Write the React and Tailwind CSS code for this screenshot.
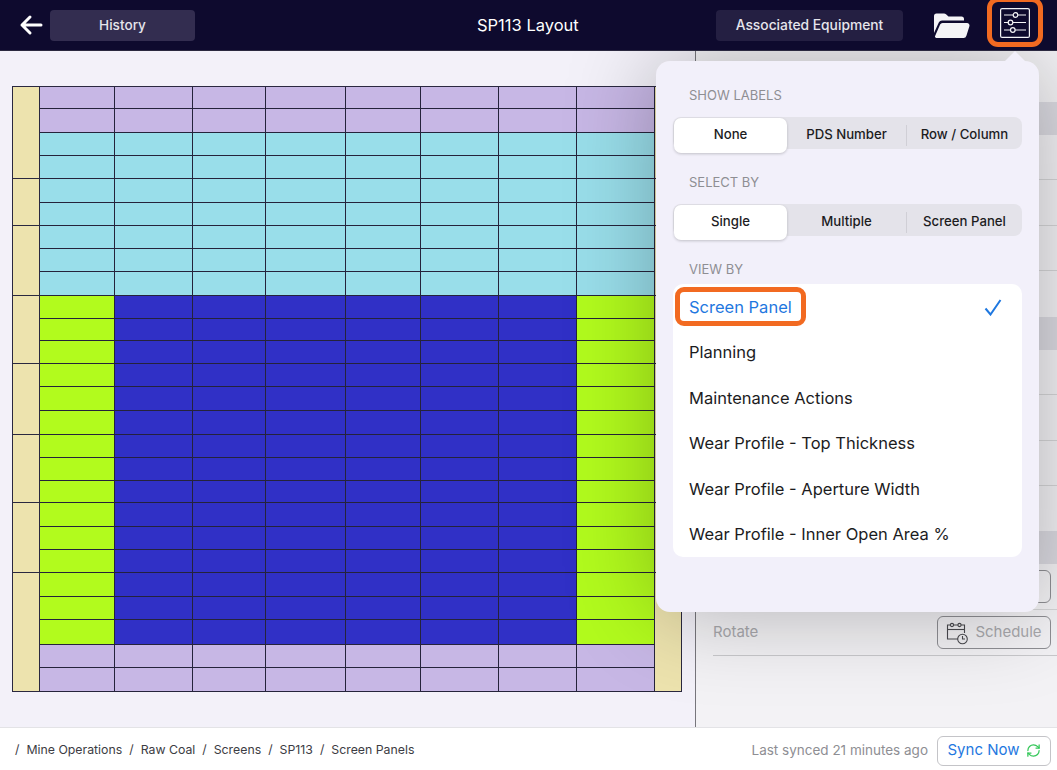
import { RefreshCw } from 'lucide-react';

const segments = [
  { label: 'SHOW LABELS', options: ['None', 'PDS Number', 'Row / Column'] },
  { label: 'SELECT BY', options: ['Single', 'Multiple', 'Screen Panel'] },
];

const viewOptions = [
  'Planning',
  'Maintenance Actions',
  'Wear Profile - Top Thickness',
  'Wear Profile - Aperture Width',
  'Wear Profile - Inner Open Area %',
];

const crumbs = ['Mine Operations', 'Raw Coal', 'Screens', 'SP113', 'Screen Panels'];

const stripBlocks = ['h-[92px]', 'h-[47px]', 'h-[70px]', 'h-[68px]', 'h-[71px]', 'h-[68px]', 'h-[70px]', 'h-[119px]'];

// 26 rows, 8 columns
const rowKind = (row) => {
  if (row < 2 || row >= 24) return 'purple';
  if (row < 9) return 'teal';
  return 'mixed';
};

const cellColor = (row, col) => {
  const kind = rowKind(row);
  if (kind === 'purple') return 'bg-[#c7b7e5]';
  if (kind === 'teal') return 'bg-[#99deea]';
  return col === 0 || col === 7 ? 'bg-[#b2fb1d]' : 'bg-[#3030c6]';
};

function Strip({ className }) {
  return (
    <div className={`flex flex-col ${className}`}>
      {stripBlocks.map((h, i) => (
        <div key={i} className={`${h} bg-[#ede3ae] border-b border-[#2a2840]`} />
      ))}
    </div>
  );
}

function PanelGrid() {
  const cells = [];
  for (let row = 0; row < 26; row++) {
    for (let col = 0; col < 8; col++) {
      cells.push(
        <div
          key={`${row}-${col}`}
          className={`${cellColor(row, col)} border-b border-r border-[#25233b]`}
        />
      );
    }
  }
  return (
    <div className="flex w-[670px] h-[606px] border-t border-l border-r border-[#2a2840]">
      <Strip className="w-[27px] border-r border-[#2a2840]" />
      <div className="grid grid-cols-[75px_78px_73px_80px_75px_78px_78px_78px] grid-rows-[22px_24px_23px_23px_24px_23px_23px_23px_24px_23px_22px_23px_23px_24px_24px_23px_23px_22px_24px_23px_23px_24px_23px_25px_23px_24px]">
        {cells}
      </div>
      <Strip className="flex-1" />
    </div>
  );
}

function CalendarClock() {
  return (
    <svg width="22" height="24" viewBox="0 0 22 24" fill="none" stroke="#4a4a4f" strokeWidth="1.1">
      <path d="M12 18H1.500V4h17v8" />
      <path d="M1.500 8.500h17" />
      <circle cx="6" cy="4" r="1.600" fill="#efeef0" />
      <circle cx="13.500" cy="4" r="1.600" fill="#efeef0" />
      <circle cx="16.500" cy="18" r="4.800" />
      <path d="M16.500 15v3h2.500" />
    </svg>
  );
}

function RightPanel() {
  return (
    <div className="flex-1 flex flex-col bg-[#f3f2f5] text-[15px] text-[#a9a9ad]">
      <div className="h-[51px]" />
      <div className="h-[33px] bg-[#dcdbe2]" />
      <div className="ml-[17px] h-[45px] border-b border-[#d6d6d8]" />
      <div className="ml-[17px] h-[46px] border-b border-[#d6d6d8]" />
      <div className="ml-[17px] h-[45px] border-b border-[#d6d6d8]" />
      <div className="h-[46px]" />
      <div className="h-[33px] bg-[#dcdbe2]" />
      <div className="ml-[17px] h-[45px] border-b border-[#d6d6d8]" />
      <div className="ml-[17px] h-[46px] border-b border-[#d6d6d8]" />
      <div className="ml-[17px] h-[45px] border-b border-[#d6d6d8]" />
      <div className="h-[45px]" />
      <div className="h-[33px] bg-[#dcdbe2]" />
      <div className="ml-[17px] h-[46px] border-b border-[#d6d6d8] flex items-center justify-end pr-[6px]">
        <div className="w-[114px] h-[33px] border border-[#8f8f94] rounded-md" />
      </div>
      <div className="ml-[17px] h-[46px] border-b border-[#c9c9cc] flex items-center justify-between pr-[6px]">
        <span>Rotate</span>
        <div className="w-[114px] h-[33px] border border-[#8f8f94] rounded-md flex items-center justify-center gap-[7px]">
          <CalendarClock />
          <span>Schedule</span>
        </div>
      </div>
    </div>
  );
}

function Popover() {
  return (
    <div className="absolute left-[656px] top-[61px] w-[383px] h-[551px] bg-[#f2f0fa] rounded-[14px] shadow-[0_0_90px_rgba(0,0,0,0.28)] z-10 px-[17px] pt-[26px]">
      <div className="absolute right-[13px] -top-[10px] w-0 h-0 border-l-[11px] border-r-[11px] border-b-[11px] border-l-transparent border-r-transparent border-b-[#f2f0fa]" />
      {segments.map((seg) => (
        <div key={seg.label} className="mb-[25px]">
          <div className="text-[13px] leading-4 text-[#8e8e93] pl-4 mb-[14px]">{seg.label}</div>
          <div className="grid grid-cols-[113px_119px_116px] h-[32px] p-px bg-[#e4e3ea] rounded-lg text-[13.200px] font-medium text-[#1c1c1e]">
            {seg.options.map((opt, i) => (
              <div
                key={opt}
                className={`flex items-center justify-center pb-px ${
                  i === 0 ? 'bg-white rounded-[7px] shadow-[0_1px_3px_rgba(0,0,0,0.2)]' : ''
                } ${i === 2 ? 'border-l border-[#d0cfd6] my-[7px]' : ''}`}
              >
                {opt}
              </div>
            ))}
          </div>
        </div>
      ))}
      <div className="text-[13px] leading-4 text-[#8e8e93] pl-4 mb-[7px]">VIEW BY</div>
      <div className="bg-white rounded-[10px] h-[273px] text-[16.500px] text-[#1c1c1e] relative">
        <div className="h-[46px] flex items-center justify-between pl-4 pr-5 text-[#1f78e0]">
          <span>Screen Panel</span>
          <svg width="18" height="17" viewBox="0 0 18 17" fill="none" stroke="#1f78e0" strokeWidth="2">
            <path d="M1.500 9.500 6.500 15.500 16.500 1" />
          </svg>
        </div>
        {viewOptions.map((opt) => (
          <div key={opt} className="h-[45.500px] flex items-center pl-4">
            {opt}
          </div>
        ))}
        <div className="absolute left-[2px] top-[3px] w-[131px] h-[39px] border-[5px] border-[#f26a21] rounded-[9px]" />
      </div>
    </div>
  );
}

export default function App() {
  return (
    <div className="relative w-[1057px] h-[770px] overflow-hidden flex flex-col font-['Inter',sans-serif]">
      {/* Top bar */}
      <div className="relative z-20 h-[51px] shrink-0 bg-[#0e0a2e] border-b border-[#2b2940] flex items-center text-white">
        <svg className="ml-[19px]" width="24" height="22" viewBox="0 0 24 22" fill="none" stroke="white" strokeWidth="3" strokeLinecap="round" strokeLinejoin="round">
          <path d="M22 11H3M11 3l-8 8 8 8" />
        </svg>
        <button className="ml-[7px] w-[145px] h-[31px] bg-[#332d50] rounded text-[13.600px] font-medium text-[#e6e5ec]">History</button>
        <div className="absolute left-[477px] text-[16.500px]">SP113 Layout</div>
        <button className="ml-[521px] w-[187px] h-[31px] bg-[#241f42] rounded text-[13.800px] font-medium text-[#e6e5ec]">Associated Equipment</button>
        <svg className="ml-[31px]" width="36" height="25" viewBox="0 0 36 25" fill="#f4f4f6">
          <path d="M0 20V3a2.500 2.500 0 0 1 2.500-2.500h7.500a3 3 0 0 1 2 .8l2.500 2.200h13a2.500 2.500 0 0 1 2.500 2.500V7.500H8a3.500 3.500 0 0 0-3.200 2.100z" />
          <path d="M8.500 10H33a2.500 2.500 0 0 1 2.400 3.200l-3 9.500A3 3 0 0 1 29.500 25H2.500a1.500 1.500 0 0 1-1.400-2.100l5-11.400A2.700 2.700 0 0 1 8.500 10z" />
        </svg>
        <div className="absolute left-[987px] -top-[3px] w-[56px] h-[50px] border-[5px] border-[#f26a21] rounded-[11px] flex items-center justify-center">
          <svg className="mt-[1px]" width="30" height="30" viewBox="0 0 30 30" fill="none" stroke="#f4f4f6" strokeWidth="1.200">
            <rect x="0.600" y="0.600" width="28.800" height="28.800" rx="1.500" />
            <path d="M4 7h9.500M18 7h8M4 14.500h4.500M13 14.500h13M4 22h6.500M15 22h11" />
            <circle cx="15.500" cy="7" r="2.300" />
            <circle cx="10.500" cy="14.500" r="2.300" />
            <circle cx="12.800" cy="22" r="2.300" />
          </svg>
        </div>
      </div>

      {/* Main */}
      <div className="flex flex-1 min-h-0">
        <div className="w-[696px] shrink-0 bg-[#f3f1f9] border-r border-[#77767c] pl-3 pt-[35px]">
          <PanelGrid />
        </div>
        <RightPanel />
      </div>

      <Popover />

      {/* Footer */}
      <div className="relative z-20 h-[43px] shrink-0 bg-white border-t border-[#e3e3e6] flex items-center justify-between pl-[15px] pr-[6px] pt-[3px]">
        <div className="flex items-center gap-[7px] text-[12.300px] text-[#3c3c43]">
          {crumbs.map((c) => (
            <span key={c} className="flex gap-[7px]">
              <span>/</span>
              <span>{c}</span>
            </span>
          ))}
        </div>
        <div className="flex items-center gap-[9px]">
          <span className="text-[13.500px] text-[#8e8e93]">Last synced 21 minutes ago</span>
          <button className="w-[114px] h-[30px] border border-[#c4c4c8] rounded-md flex items-center justify-center gap-[6px] text-[15px] text-[#1f78e0]">
            Sync Now
            <RefreshCw size={15} color="#34c759" />
          </button>
        </div>
      </div>
    </div>
  );
}
